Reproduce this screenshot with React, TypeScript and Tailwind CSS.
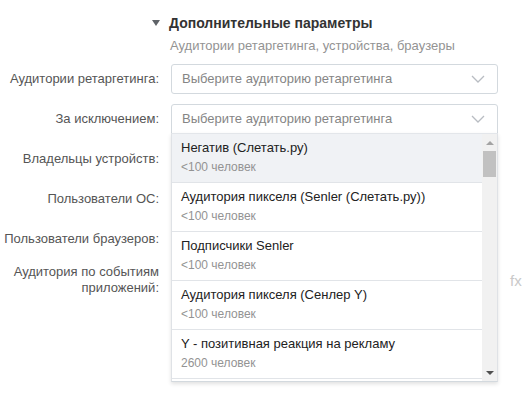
import React from "react";

const font = { fontFamily: '"Liberation Sans", Arial, sans-serif' };

function Chevron() {
  return (
    <svg width="14" height="8" viewBox="0 0 14 8" className="shrink-0">
      <path d="M1 1l6 6 6-6" fill="none" stroke="#b8bcc2" strokeWidth="1.3" />
    </svg>
  );
}

function Select({ open = false }: { open?: boolean }) {
  return (
    <div
      className={`flex h-[30px] w-[327px] items-center justify-between border border-[#d3d9de] bg-white pl-[10px] pr-[12px] text-[13px] text-[#858585] ${
        open ? "rounded-t-[3px]" : "rounded-[3px]"
      }`}
    >
      <span>Выберите аудиторию ретаргетинга</span>
      <Chevron />
    </div>
  );
}

const items = [
  { t: "Негатив (Слетать.ру)", s: "<100 человек" },
  { t: "Аудитория пикселя (Senler (Слетать.ру))", s: "<100 человек" },
  { t: "Подписчики Senler", s: "<100 человек" },
  { t: "Аудитория пикселя (Сенлер Y)", s: "<100 человек" },
  { t: "Y - позитивная реакция на рекламу", s: "2600 человек" },
];

function Row({ label, children }: { label: React.ReactNode; children?: React.ReactNode }) {
  return (
    <div className="flex items-center gap-[12px]">
      <div className="w-[159px] text-right text-[13px] leading-[16px] text-[#555]">{label}</div>
      {children}
    </div>
  );
}

export default function App() {
  return (
    <div className="relative h-[402px] w-[529px] overflow-hidden bg-white" style={font}>
      <div className="pt-[14px]">
        <div className="flex items-center pl-[152px]">
          <svg width="8" height="6" viewBox="0 0 8 6" className="mr-[9px]">
            <path d="M0 0h8L4 6z" fill="#5f6368" />
          </svg>
          <span className="text-[14px] font-bold leading-[18px] text-[#333]">Дополнительные параметры</span>
        </div>
        <div className="mt-[6px] pl-[170px] text-[13px] leading-[16px] text-[#939393]">
          Аудитории ретаргетинга, устройства, браузеры
        </div>
      </div>

      <div className="mt-[10px] flex flex-col gap-[10px]">
        <Row label="Аудитории ретаргетинга:">
          <Select />
        </Row>
        <Row label="За исключением:">
          <Select open />
        </Row>
        <Row label="Владельцы устройств:">
          <div className="h-[30px]" />
        </Row>
        <Row label="Пользователи ОС:">
          <div className="h-[30px]" />
        </Row>
        <Row label="Пользователи браузеров:">
          <div className="h-[30px]" />
        </Row>
        <div className="flex items-start gap-[12px]">
          <div className="w-[159px] text-right text-[13px] leading-[16px] text-[#555]">
            Аудитория по событиям
            <br />
            приложений:
          </div>
          <div className="w-[327px]" />
          <div className="mt-[8px] text-[15px] leading-[18px] text-[#c9c9c9]">fx</div>
        </div>
      </div>

      <div className="absolute left-[171px] top-[133px] flex h-[249px] w-[327px] border border-t-[#e3e6ea] border-x-[#dfe2e6] border-b-[#d3d9de] bg-white shadow-[0_2px_4px_rgba(0,0,0,0.12)]">
        <div className="flex-1 overflow-hidden">
          {items.map((it, i) => (
            <div
              key={i}
              className={`h-[49px] border-b border-[#e1e4e8] pl-[9px] pt-[5px] ${i === 0 ? "bg-[#f0f2f5]" : "bg-white"}`}
            >
              <div className="text-[13px] leading-[18px] text-[#222]">{it.t}</div>
              <div className="mt-[1px] text-[12px] leading-[18px] text-[#939393]">{it.s}</div>
            </div>
          ))}
        </div>
        <div className="relative flex w-[15px] flex-col bg-[#f1f1f1]">
          <div className="flex h-[17px] items-center justify-center">
            <svg width="8" height="4" viewBox="0 0 8 4">
              <path d="M0 4L4 0l4 4z" fill="#a3a3a3" />
            </svg>
          </div>
          <div className="ml-[1px] h-[26px] w-[13px] bg-[#c1c1c1]" />
          <div className="flex-1" />
          <div className="flex h-[17px] items-center justify-center">
            <svg width="8" height="4" viewBox="0 0 8 4">
              <path d="M0 0h8L4 4z" fill="#505050" />
            </svg>
          </div>
        </div>
      </div>
    </div>
  );
}
